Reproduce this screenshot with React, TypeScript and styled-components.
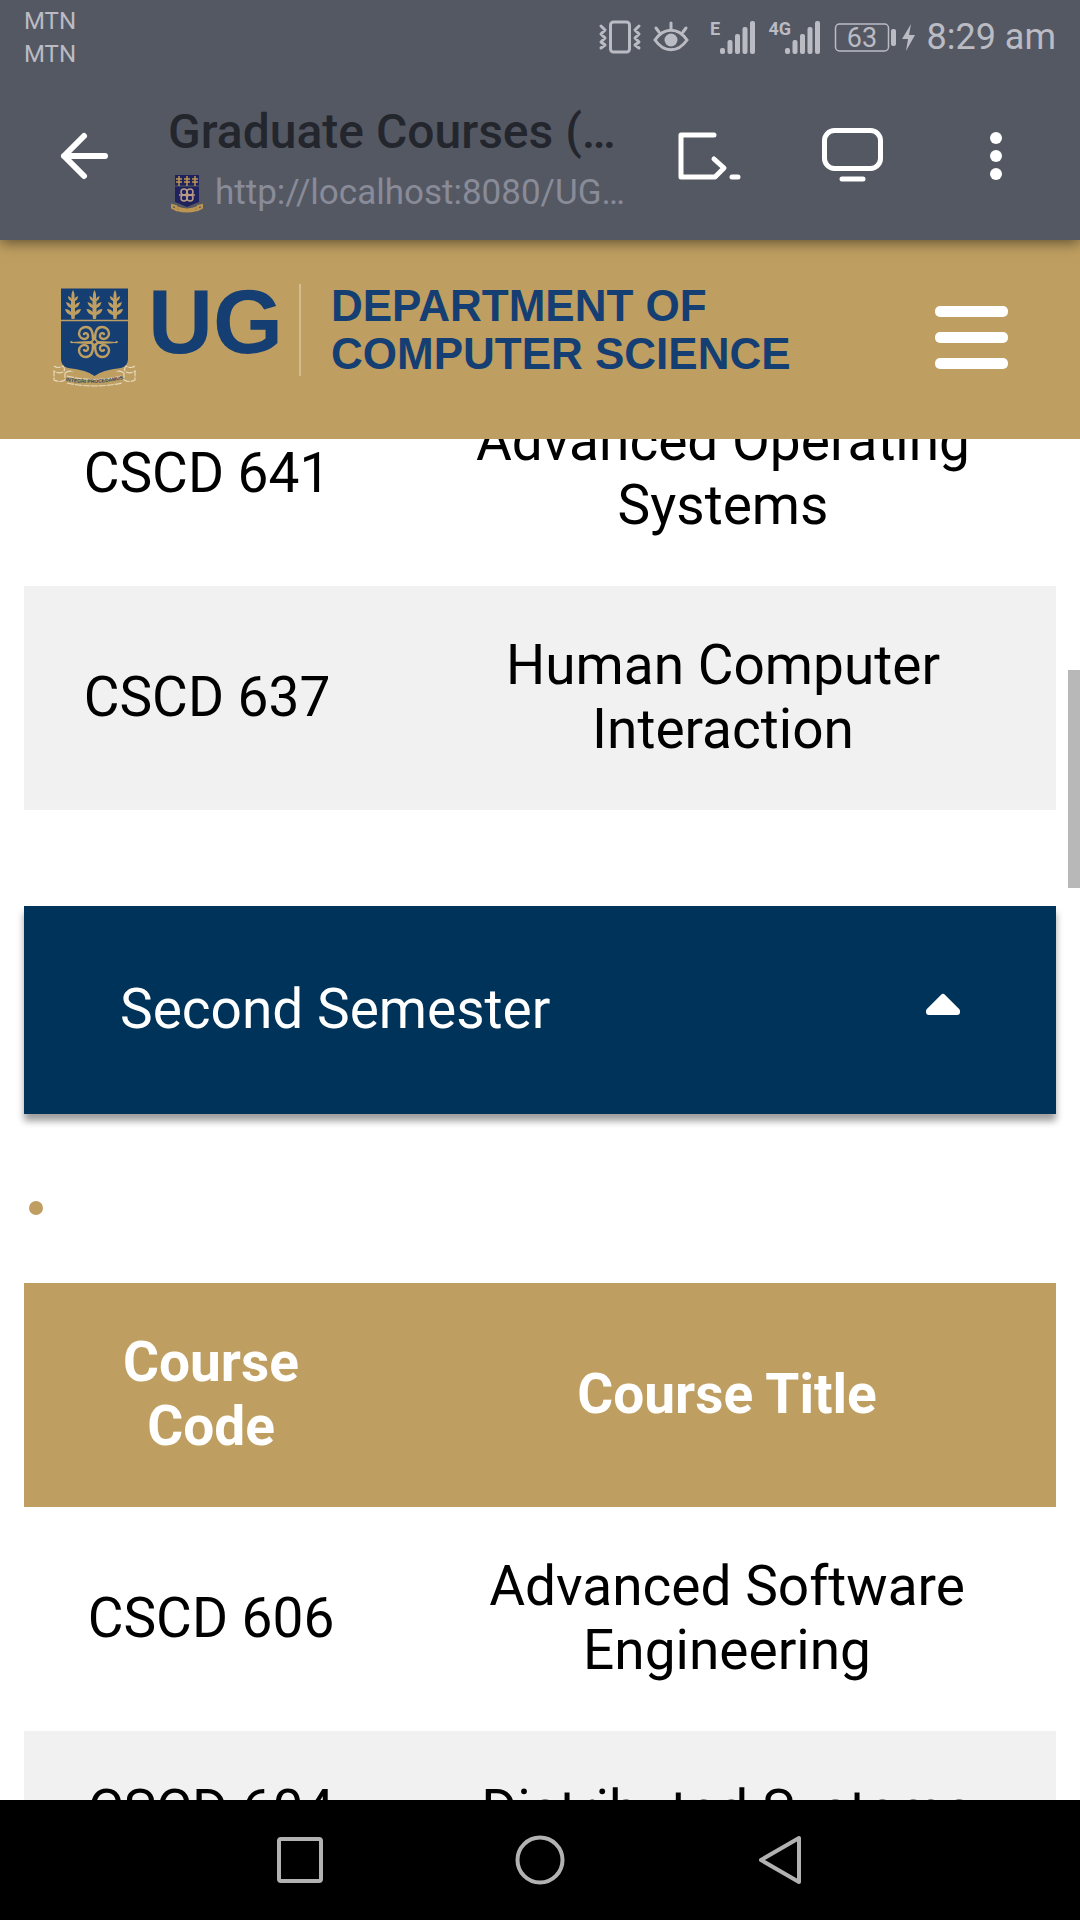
import React from "react";
import styled, { createGlobalStyle } from "styled-components";

const GOLD = "#bf9f61";
const NAVY = "#153e73";
const STATUS = "#babbc3";

const GlobalStyle = createGlobalStyle`
  *, *::before, *::after { box-sizing: border-box; }
  body { margin: 0; background: #fff; font-family: Roboto, "Liberation Sans", sans-serif; }
  button { padding: 0; border: 0; background: none; font: inherit; color: inherit; cursor: pointer; }
  svg { display: block; overflow: visible; }
`;

const Screen = styled.div`
  display: flex;
  flex-direction: column;
  height: 100vh;
  overflow: hidden;
`;

const BrowserChrome = styled.header`
  position: relative;
  z-index: 1;
  flex: none;
  background: #545863;
  box-shadow: 0 2px 14px rgba(0, 0, 0, 0.55);
`;

const StatusBar = styled.div`
  display: flex;
  justify-content: space-between;
  height: 72px;
  padding: 5px 24px 0;
  color: ${STATUS};
`;

const Carriers = styled.div`
  font-size: 24px;
  line-height: 33px;
`;

const StatusIcons = styled.div`
  display: flex;
  align-items: center;
  gap: 12px;
  height: 64px;
`;

const Clock = styled.time`
  font-size: 36px;
  line-height: 42px;
  white-space: nowrap;
`;

const Toolbar = styled.div`
  display: flex;
  align-items: center;
  height: 168px;
  padding: 0 12px 0 60px;
  color: #fff;
`;

const BackButton = styled.button`
  width: 108px;
  height: 96px;
  display: flex;
  align-items: center;
`;

const PageInfo = styled.div`
  flex: 1;
  min-width: 0;
  padding-top: 10px;
  white-space: nowrap;
`;

const PageTitle = styled.div`
  font-size: 48px;
  line-height: 64px;
  font-weight: 500;
  color: #24262d;
`;

const PageUrl = styled.div`
  display: flex;
  align-items: center;
  gap: 12px;
  padding-left: 3px;
  font-size: 35px;
  line-height: 58px;
  color: #898b98;
`;

const ToolButton = styled.button`
  flex: none;
  display: flex;
  align-items: center;
  justify-content: center;
  width: 144px;
  height: 96px;
`;

const SiteHeader = styled.div`
  flex: none;
  display: flex;
  align-items: center;
  justify-content: space-between;
  padding: 42px 72px 51px 52px;
  background: ${GOLD};
`;

const Brand = styled.a`
  display: flex;
  align-items: flex-start;
  color: ${NAVY};
  font-family: "Liberation Sans", Arial, sans-serif;
  font-weight: 700;
  text-decoration: none;
`;

const Initials = styled.span`
  margin-left: 12px;
  font-size: 90px;
  line-height: 80px;
`;

const Divider = styled.span`
  width: 2px;
  height: 92px;
  margin: 2px 30px 0 16px;
  background: #d3bd8f;
`;

const Department = styled.span`
  font-size: 44px;
  line-height: 48px;
`;

const Page = styled.main`
  position: relative;
  flex: 1;
  min-height: 0;
  overflow: hidden;
`;

const Content = styled.div`
  margin-top: -77px;
  padding: 0 24px;
`;

const CourseTable = styled.table`
  width: 100%;
  table-layout: fixed;
  border-collapse: collapse;
  font-size: 55px;
  line-height: 64px;
  text-align: center;
  color: #000;
`;

const CodeColumn = styled.col<{ $width: number }>`
  width: ${(p) => p.$width}px;
`;

const HeadCell = styled.th`
  padding: 47px 48px 49px;
  background: ${GOLD};
  color: #fff;
  font-weight: 700;
`;

const Row = styled.tr<{ $shaded?: boolean }>`
  background: ${(p) => (p.$shaded ? "#f1f1f1" : "#fff")};
`;

const Cell = styled.td`
  padding: 47px 48px 49px;
`;

const CodeCell = styled(Cell)`
  white-space: nowrap;
`;

const Accordion = styled.button`
  display: flex;
  align-items: center;
  justify-content: space-between;
  width: 100%;
  margin: 96px 0 0;
  padding: 71px 95px 73px 96px;
  background: #003359;
  box-shadow: 0 7px 7px rgba(0, 0, 0, 0.38);
  color: #fff;
  font-size: 55px;
  line-height: 64px;
`;

const BulletList = styled.ul`
  display: flex;
  align-items: center;
  height: 169px;
  margin: 0;
  padding: 18px 0 0 5px;
  list-style: none;
`;

const Bullet = styled.li`
  width: 14px;
  height: 14px;
  border-radius: 50%;
  background: ${GOLD};
`;

const ScrollThumb = styled.div`
  position: absolute;
  top: 231px;
  right: 0;
  width: 12px;
  height: 218px;
  background: #b8b8b8;
`;

const NavBar = styled.nav`
  flex: none;
  display: flex;
  justify-content: center;
  height: 120px;
  background: #000;
`;

const NavButton = styled.button`
  display: flex;
  align-items: center;
  justify-content: center;
  width: 240px;
`;

const VibrateIcon = () => (
  <svg width="42" height="34" viewBox="0 0 42 34" fill="none" stroke={STATUS} strokeWidth="3" strokeLinecap="round" strokeLinejoin="round">
    <rect x="11.500" y="2" width="19" height="30" rx="3" />
    <path d="M2 6l4 4-4 4 4 4-4 4 4 3-4 3M40 6l-4 4 4 4-4 4 4 4-4 3 4 3" />
  </svg>
);

const EyeIcon = () => (
  <svg width="42" height="34" viewBox="0 0 42 34" fill="none" stroke={STATUS} strokeWidth="3" strokeLinecap="round">
    <path d="M2 20C11 7 25 7 34 20 25 33 11 33 2 20zM18 9V3M6 12L3 8M30 12l3-4" />
    <circle cx="18" cy="20" r="6.500" fill={STATUS} stroke="none" />
  </svg>
);

const SignalIcon = ({ label, width, start }: { label: string; width: number; start: number }) => (
  <svg width={width} height="34" viewBox={`0 0 ${width} 34`} fill={STATUS}>
    <text x={start} y="15" fontSize="18" fontWeight="700" textAnchor="end" dx={label.length > 1 ? 6 : 0}>{label}</text>
    {[6, 14, 20, 27, 33].map((h, i) => (
      <rect key={h} x={start + i * 7.5} y={34 - h} width="5" height={h} rx="2" />
    ))}
  </svg>
);

const BatteryIcon = () => (
  <svg width="82" height="34" viewBox="0 0 82 34" fill={STATUS}>
    <rect x="2.500" y="4" width="53" height="27" rx="4" fill="none" stroke={STATUS} strokeWidth="1.500" />
    <text x="29" y="27" fontSize="27" textAnchor="middle">63</text>
    <rect x="58" y="9" width="5" height="17" rx="2" />
    <path d="M78 4L69 19h6l-2 12 9-16h-6z" />
  </svg>
);

const BackIcon = () => (
  <svg width="50" height="50" viewBox="0 0 50 50" fill="none" stroke="#fff" strokeWidth="6" strokeLinecap="round" strokeLinejoin="round">
    <path d="M24 5L4 25l20 20M4 25h41" />
  </svg>
);

const ReaderIcon = () => (
  <svg width="64" height="50" viewBox="0 0 64 50" fill="none" stroke="#fff" strokeWidth="5" strokeLinecap="round" strokeLinejoin="round">
    <path d="M38 4H5v42h34l9-9-10-9M56 46h6" />
  </svg>
);

const MonitorIcon = () => (
  <svg width="62" height="56" viewBox="0 0 62 56" fill="none" stroke="#fff" strokeWidth="5" strokeLinecap="round">
    <rect x="3.500" y="2.500" width="56" height="38" rx="10" />
    <path d="M21 51h21" />
  </svg>
);

const MoreIcon = () => (
  <svg width="12" height="48" viewBox="0 0 12 48" fill="#fff">
    <circle cx="6" cy="6" r="6" />
    <circle cx="6" cy="24" r="6" />
    <circle cx="6" cy="42" r="6" />
  </svg>
);

const MenuIcon = () => (
  <svg width="74" height="64" viewBox="0 0 74 64" fill="#fff">
    {[4, 30, 56].map((y) => (
      <rect key={y} x="1" y={y - 1} width="73" height="11" rx="5" />
    ))}
  </svg>
);

const Favicon = () => (
  <svg width="32" height="38" viewBox="0 0 32 38">
    <path d="M4 1h24v27l-5 2-7 3-7-3-5-2z" fill="#1f225c" />
    <path d="M4 12h24" stroke="#545863" strokeWidth="1" />
    <g stroke="#bd9552" fill="none" strokeWidth="1.500">
      <path d="M8 2v10M5 5h6M5 8h6M16 2v10M13 5h6M13 8h6M24 2v10M21 5h6M21 8h6" />
      <g stroke="#b99c86">
        <circle cx="13" cy="18" r="3" />
        <circle cx="19" cy="18" r="3" />
        <circle cx="13" cy="24" r="3" />
        <circle cx="19" cy="24" r="3" />
        <path d="M8 21h16" />
      </g>
      <path d="M1 31l4 1v4l-4-2zM31 31l-4 1v4l4-2zM5 33q11 5 22 0M6 36q10 3 20 0" strokeWidth="2" />
    </g>
  </svg>
);

const palm =
  "M-1.500 31L-2 27Q-7 26-8 21-4 21-2 24V20Q-6 19-7 14-3 15-2 17V13Q-5 12-5 8-2 9-1.500 11Q-2 5 0 2 2 5 1.500 11 2 9 5 8 5 12 2 13V17Q3 15 7 14 6 19 2 20V24Q4 21 8 21 7 26 2 27L1.500 31z";

const Crest = () => (
  <svg width="84" height="106" viewBox="0 0 84 106">
    <path d="M9 6.500h67V77q0 7-7 9-19 2-26.500 8Q35 88 16 86q-7-2-7-9z" fill={NAVY} />
    <path d="M9 38.500h67" stroke={GOLD} strokeWidth="1.500" />
    <g fill={GOLD}>
      {[21, 42.5, 63].map((x) => (
        <path key={x} d={palm} transform={`translate(${x} 6)`} />
      ))}
      <path d="M18 60q1-2 3 0 13-1 18-1l3.500-4 3.500 4q5 0 17 1 2-2 3 0-1 2-3 1-12 1-17 1l-3.500 4-3.500-4q-5 0-18-1-2 1-3-1z" />
    </g>
    <path d="M42.500 58l2 2-2 2-2-2z" fill={NAVY} />
    <g fill="none" stroke={GOLD} strokeWidth="2.400" strokeLinecap="round">
      {["translate(42 60)", "translate(42 60) scale(-1 1)", "translate(42 60) scale(1 -1)", "translate(42 60) scale(-1 -1)"].map((t) => (
        <path key={t} transform={t} d="M1-3C1-10 3-15 8-15 12-15 15-12 15-8.500 15-5 12-3 9.500-3 7-3 5.500-5 6-7 6.500-9 9-9.500 10-8" />
      ))}
    </g>
    <path id="motto-ribbon" d="M14 99Q42 104 71 97" fill="none" />
    <g fill="none" stroke="#e5d8bd" strokeWidth="1.200">
      <path d="M2 84q4 3 9 0 3 4 0 6-5 2-9-1v9q6 3 11 0v-7M13 91q4-3 8-1M83 84q-4 3-9 0-3 4 0 6 5 2 9-1v9q-6 3-11 0v-7M72 91q-4-3-8-1M15 94Q42 101 70 94M15 101Q42 107 70 101" strokeDasharray="7 1" />
    </g>
    <text fontSize="5" fontWeight="700" fill="#33475c" textAnchor="middle">
      <textPath href="#motto-ribbon" startOffset="50%">INTEGRI PROCEDAMUS</textPath>
    </text>
  </svg>
);

type Course = { code: string; title: string; shaded?: boolean };

const firstSemester: Course[] = [
  { code: "CSCD 641", title: "Advanced Operating Systems" },
  { code: "CSCD 637", title: "Human Computer Interaction", shaded: true },
];

const secondSemester: Course[] = [
  { code: "CSCD 606", title: "Advanced Software Engineering" },
  { code: "CSCD 604", title: "Distributed Systems", shaded: true },
];

const CourseRows = ({ courses }: { courses: Course[] }) => (
  <tbody>
    {courses.map((c) => (
      <Row key={c.code} $shaded={c.shaded}>
        <CodeCell>{c.code}</CodeCell>
        <Cell>{c.title}</Cell>
      </Row>
    ))}
  </tbody>
);

export default function App() {
  return (
    <Screen>
      <GlobalStyle />
      <BrowserChrome>
        <StatusBar>
          <Carriers>
            <div>MTN</div>
            <div>MTN</div>
          </Carriers>
          <StatusIcons>
            <VibrateIcon />
            <EyeIcon />
            <SignalIcon label="E" width={48} start={13} />
            <SignalIcon label="4G" width={54} start={18} />
            <BatteryIcon />
            <Clock>8:29 am</Clock>
          </StatusIcons>
        </StatusBar>
        <Toolbar>
          <BackButton aria-label="Back"><BackIcon /></BackButton>
          <PageInfo>
            <PageTitle>Graduate Courses (…</PageTitle>
            <PageUrl>
              <Favicon />
              <span>http://localhost:8080/UG…</span>
            </PageUrl>
          </PageInfo>
          <ToolButton aria-label="Reader view"><ReaderIcon /></ToolButton>
          <ToolButton aria-label="Desktop site"><MonitorIcon /></ToolButton>
          <ToolButton aria-label="More options"><MoreIcon /></ToolButton>
        </Toolbar>
      </BrowserChrome>

      <SiteHeader>
        <Brand href="#">
          <Crest />
          <Initials>UG</Initials>
          <Divider />
          <Department>
            DEPARTMENT OF
            <br />
            COMPUTER SCIENCE
          </Department>
        </Brand>
        <button aria-label="Menu"><MenuIcon /></button>
      </SiteHeader>

      <Page>
        <Content>
          <CourseTable>
            <colgroup>
              <CodeColumn $width={366} />
              <col />
            </colgroup>
            <CourseRows courses={firstSemester} />
          </CourseTable>
          <Accordion aria-expanded="true">
            Second Semester
            <svg width="36" height="32" viewBox="0 0 36 32" fill="#fff" stroke="#fff" strokeWidth="6" strokeLinejoin="round">
              <path d="M18 4L4 18v1h28v-1z" />
            </svg>
          </Accordion>
          <BulletList>
            <Bullet />
          </BulletList>
          <CourseTable>
            <colgroup>
              <CodeColumn $width={374} />
              <col />
            </colgroup>
            <thead>
              <tr>
                <HeadCell scope="col">Course Code</HeadCell>
                <HeadCell scope="col">Course Title</HeadCell>
              </tr>
            </thead>
            <CourseRows courses={secondSemester} />
          </CourseTable>
        </Content>
        <ScrollThumb />
      </Page>

      <NavBar>
        <NavButton aria-label="Recent apps">
          <svg width="46" height="46" viewBox="0 0 46 46" fill="none" stroke="#b2b2b2" strokeWidth="4">
            <rect x="2" y="2" width="42" height="42" rx="2" />
          </svg>
        </NavButton>
        <NavButton aria-label="Home">
          <svg width="50" height="50" viewBox="0 0 50 50" fill="none" stroke="#b2b2b2" strokeWidth="4">
            <circle cx="25" cy="25" r="22.500" />
          </svg>
        </NavButton>
        <NavButton aria-label="Back">
          <svg width="44" height="50" viewBox="0 0 44 50" fill="none" stroke="#b2b2b2" strokeWidth="4" strokeLinejoin="round">
            <path d="M41 3v44L3 25z" />
          </svg>
        </NavButton>
      </NavBar>
    </Screen>
  );
}
